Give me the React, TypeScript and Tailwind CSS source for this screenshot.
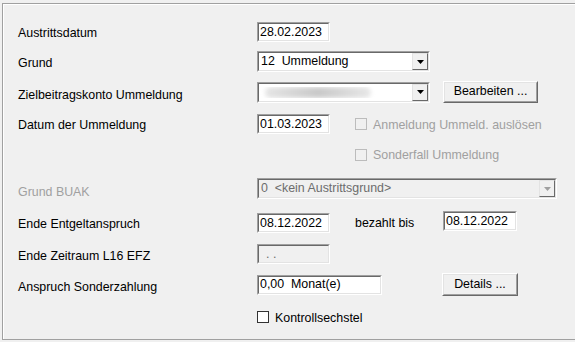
import type { ReactNode } from "react";

const font = "font-['Liberation_Sans',Arial,sans-serif] text-[12.4px] leading-none";

function Sunken({
  width,
  height,
  disabled,
  children,
}: {
  width: string;
  height: string;
  disabled?: boolean;
  children?: ReactNode;
}) {
  return (
    <div
      className={`${width} ${height} shrink-0 border border-t-[#a0a0a0] border-l-[#a0a0a0] border-b-white border-r-white`}
    >
      <div
        className={`flex h-full w-full items-center border border-t-[#696969] border-l-[#696969] border-b-[#e3e3e3] border-r-[#e3e3e3] ${
          disabled ? "bg-[#f0f0f0]" : "bg-white"
        }`}
      >
        {children}
      </div>
    </div>
  );
}

function Arrow({ disabled }: { disabled?: boolean }) {
  return (
    <div className="flex h-full w-[16px] shrink-0 items-center justify-center border border-t-[#e3e3e3] border-l-[#e3e3e3] border-b-[#696969] border-r-[#696969] bg-[#f0f0f0]">
      <svg width="7" height="4" viewBox="0 0 7 4">
        <path d="M0 0 H7 L3.5 4 Z" fill={disabled ? "#a0a0a0" : "#000"} />
      </svg>
    </div>
  );
}

function Combo({
  width,
  disabled,
  children,
}: {
  width: string;
  disabled?: boolean;
  children?: ReactNode;
}) {
  return (
    <Sunken width={width} height="h-[21px]" disabled={disabled}>
      <div className="flex-1 overflow-hidden pl-[2px]">{children}</div>
      <Arrow disabled={disabled} />
    </Sunken>
  );
}

function Button({ width, height, label }: { width: string; height: string; label: string }) {
  return (
    <div
      className={`${width} ${height} shrink-0 border border-t-white border-l-white border-b-[#696969] border-r-[#696969]`}
    >
      <div className="flex h-full w-full items-center justify-center border border-t-[#e3e3e3] border-l-[#e3e3e3] border-b-[#a0a0a0] border-r-[#a0a0a0] bg-[#f0f0f0] pb-[1px]">
        {label}
      </div>
    </div>
  );
}

function Check({ label, disabled }: { label: string; disabled?: boolean }) {
  return (
    <div className="flex items-center gap-[6px]">
      <div
        className={`h-[12px] w-[12px] border ${
          disabled ? "border-[#bcbcbc] bg-[#f0f0f0]" : "border-[#333333] bg-white"
        }`}
      />
      <span className={`translate-y-[1px] ${disabled ? "text-[#a0a0a0]" : "text-black"}`}>{label}</span>
    </div>
  );
}

function Label({
  children,
  disabled,
  shift = "translate-y-[2px]",
}: {
  children: ReactNode;
  disabled?: boolean;
  shift?: string;
}) {
  return (
    <div className={`w-[239px] shrink-0 ${shift} ${disabled ? "text-[#a0a0a0]" : "text-black"}`}>
      {children}
    </div>
  );
}

export default function App() {
  return (
    <div className={`h-[342px] w-[575px] overflow-hidden bg-[#f0f0f0] ${font}`}>
      <div className="ml-[2px] mt-[3px] h-[337px] w-[600px] border border-[#a0a0a0] shadow-[inset_1px_1px_0_#fff]">
        <div className="flex flex-col pl-[15px] pt-[18px]">
          <div className="flex h-[20px] items-center">
            <Label shift="translate-y-[1px]">Austrittsdatum</Label>
            <Sunken width="w-[73px]" height="h-[20px]">
              <span className="pl-[1px]">28.02.2023</span>
            </Sunken>
          </div>

          <div className="mt-[9px] flex h-[21px] items-center">
            <Label>Grund</Label>
            <Combo width="w-[173px]">
              <span className="whitespace-pre">12  Ummeldung</span>
            </Combo>
          </div>

          <div className="mt-[9px] flex h-[22px] items-center">
            <Label shift="translate-y-[3px]">Zielbeitragskonto Ummeldung</Label>
            <Combo width="w-[173px]">
              <div className="ml-[4px] h-[11px] w-[106px] rounded-full bg-gradient-to-r from-[#e6e6e6] via-[#c9c9c9] to-[#e8e8e8] blur-[2px]" />
            </Combo>
            <div className="ml-[13px]">
              <Button width="w-[95px]" height="h-[22px]" label="Bearbeiten ..." />
            </div>
          </div>

          <div className="mt-[11px] flex h-[20px] items-center">
            <Label shift="translate-y-[1px]">Datum der Ummeldung</Label>
            <Sunken width="w-[73px]" height="h-[20px]">
              <span className="pl-[1px]">01.03.2023</span>
            </Sunken>
            <div className="ml-[25px]">
              <Check label="Anmeldung Ummeld. auslösen" disabled />
            </div>
          </div>

          <div className="mt-[10px] flex h-[21px] items-center">
            <div className="ml-[337px]">
              <Check label="Sonderfall Ummeldung" disabled />
            </div>
          </div>

          <div className="mt-[13px] flex h-[21px] items-center">
            <Label disabled shift="translate-y-[4px]">
              Grund BUAK
            </Label>
            <Combo width="w-[300px]" disabled>
              <span className="whitespace-pre text-[#6d6d6d]">0  &lt;kein Austrittsgrund&gt;</span>
            </Combo>
          </div>

          <div className="mt-[12px] flex h-[22px] items-center">
            <Label>Ende Entgeltanspruch</Label>
            <div className="mt-[2px]">
              <Sunken width="w-[73px]" height="h-[20px]">
                <span className="pl-[1px]">08.12.2022</span>
              </Sunken>
            </div>
            <div className="ml-[25px] w-[88px] translate-y-[1px]">bezahlt bis</div>
            <div className="mb-[2px]">
              <Sunken width="w-[74px]" height="h-[20px]">
                <span className="pl-[1px]">08.12.2022</span>
              </Sunken>
            </div>
          </div>

          <div className="mt-[11px] flex h-[20px] items-center">
            <Label>Ende Zeitraum L16 EFZ</Label>
            <Sunken width="w-[73px]" height="h-[20px]" disabled>
              <span className="pl-[7px] text-[#6d6d6d]">. .</span>
            </Sunken>
          </div>

          <div className="mt-[9px] flex h-[23px] items-center">
            <Label shift="translate-y-[3px]">Anspruch Sonderzahlung</Label>
            <Sunken width="w-[125px]" height="h-[20px]">
              <span className="whitespace-pre pl-[1px]">0,00  Monat(e)</span>
            </Sunken>
            <div className="ml-[60px]">
              <Button width="w-[76px]" height="h-[23px]" label="Details ..." />
            </div>
          </div>

          <div className="mt-[14px] flex h-[14px] items-center">
            <div className="ml-[239px]">
              <Check label="Kontrollsechstel" />
            </div>
          </div>
        </div>
      </div>
    </div>
  );
}
